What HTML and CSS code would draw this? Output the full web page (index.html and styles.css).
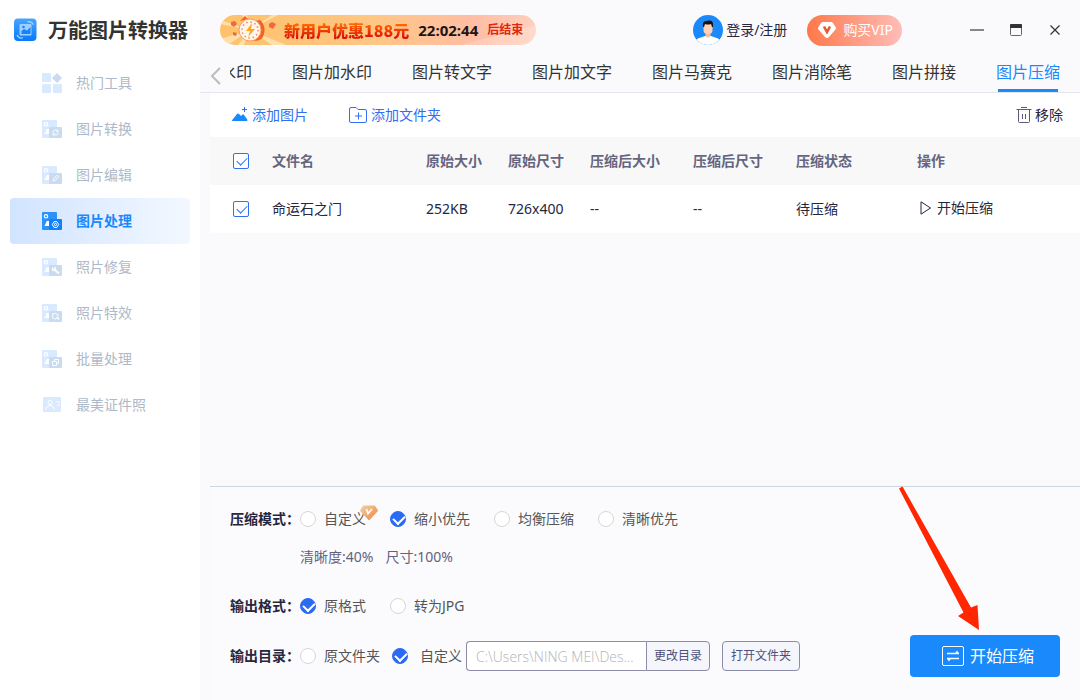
FILE: index.html
```html
<!DOCTYPE html>
<html lang="zh-CN">
<head>
<meta charset="utf-8">
<title>万能图片转换器</title>
<link rel="stylesheet" href="styles.css">
</head>
<body>
<svg class="defs" aria-hidden="true">
  <defs>
    <symbol id="photo" viewBox="0 0 20 18">
      <path class="sheet" d="M1 0h13a1 1 0 0 1 1 1v16a1 1 0 0 1-1 1H1a1 1 0 0 1-1-1V1a1 1 0 0 1 1-1z"/>
      <circle cx="4" cy="4.300" r="1.700" fill="none" stroke="#fff" stroke-width="1.200"/>
      <path d="M2.500 14l2.300-5h2.200v5z" fill="#fff"/>
      <rect class="tile" x="7" y="7" width="13" height="11" rx="1"/>
    </symbol>
  </defs>
</svg>
<div class="app">
  <aside class="sidebar">
    <div class="brand">
      <svg width="24" height="24" viewBox="0 0 24 24" aria-hidden="true">
        <defs><linearGradient id="lg" x1="0" y1="0" x2="0" y2="1"><stop offset="0" stop-color="#46a6ff"/><stop offset="1" stop-color="#0a78fb"/></linearGradient></defs>
        <rect x="0" y="0.500" width="22.500" height="22.500" rx="4" fill="url(#lg)"/>
        <rect x="5.500" y="6" width="12" height="11.500" rx="1" fill="#9dd0ff"/>
        <path d="M7.500 16v-3l2.500-2 3 1.500L16.500 9v7z" fill="#1683fa"/>
        <circle cx="9.500" cy="9" r="1.300" fill="#1683fa"/>
        <path d="M13.500 3.800q4-1 6 3M3 17q2 4 6 2.800" fill="none" stroke="#a8d6ff" stroke-width="1.200"/>
      </svg>
      <h1>万能图片转换器</h1>
    </div>
    <nav class="nav">
      <button class="item" type="button"><svg width="20" height="20" viewBox="0 0 20 20"><rect class="sheet" width="9" height="9" rx="1"/><rect class="sheet" y="11" width="9" height="9" rx="1"/><rect class="sheet" x="11" y="11" width="9" height="9" rx="1"/><path class="tile" d="M15 0l5 5-5 5-5-5z"/></svg>热门工具</button>
      <button class="item" type="button"><svg width="20" height="18" viewBox="0 0 20 18"><use href="#photo"/><path class="mark" d="M10.800 12.500a2.700 2.700 0 0 1 5-1.300M16.200 12.500a2.700 2.700 0 0 1-5 1.300M15.900 9.500v1.800h-1.700M11.100 15.500v-1.800h1.700"/></svg>图片转换</button>
      <button class="item" type="button"><svg width="20" height="18" viewBox="0 0 20 18"><use href="#photo"/><path class="mark" d="M11 15l.5-2.200 3.700-3.500 1.500 1.500-3.700 3.700z"/></svg>图片编辑</button>
      <button class="item active" type="button"><svg width="20" height="18" viewBox="0 0 20 18"><use href="#photo"/><path class="mark" d="M12 9.700h3l1.700 2.800-1.700 2.900h-3l-1.700-2.900z"/><circle class="mark" cx="13.500" cy="12.500" r="1.100"/></svg>图片处理</button>
      <button class="item" type="button"><svg width="20" height="18" viewBox="0 0 20 18"><use href="#photo"/><circle cx="12" cy="11" r="2.200" fill="#fff"/><path d="M13 12l4 3.500" stroke="#fff" stroke-width="2"/><path class="tile" d="M11 8l1.800 2.200-1.500 1z"/></svg>照片修复</button>
      <button class="item" type="button"><svg width="20" height="18" viewBox="0 0 20 18"><use href="#photo"/><path class="mark" d="M10.500 9.500l1.500.5 1.500-1 1 1.200 1.700.3-.5 2 1 2-2-.2-1.700 1-1.200-1.300-1.500-.3.700-1.700zM14.500 13l2.500 3"/></svg>照片特效</button>
      <button class="item" type="button"><svg width="20" height="18" viewBox="0 0 20 18"><use href="#photo"/><path class="mark" d="M10.500 11.500h4v4h-4zM12.500 11.500v-2h4v4h-2"/></svg>批量处理</button>
      <button class="item" type="button"><svg width="20" height="16" viewBox="0 0 20 16"><rect class="sheet" x="1" width="18" height="15" rx="1"/><circle class="mark" cx="8" cy="5.500" r="2"/><path class="mark" d="M3.500 12.500q1-4 4.500-4t4.500 4M14 5h4M15 8h3"/></svg>最美证件照</button>
    </nav>
  </aside>

  <main class="main">
    <header class="topbar">
      <div class="promo">
        <svg class="clock" width="70" height="30" viewBox="0 0 70 30" aria-hidden="true">
          <g fill="#fff3cf" opacity=".6"><path d="M30 15L0 24v6h8zM30 15L18 30h6zM30 15l22 15h14zM30 15L22 0h5zM30 15L58 0h-6zM30 15L0 5v4z"/></g>
          <path d="M11 7l4-1 2 3-3 3-3-2zM49 9l3-2 4 2-3 5-4-2zM13 17l4 1-1 3-3-1z" fill="#ee6a3c"/>
          <path d="M20 6l5-5 3 3M31 25q11 3 13-6t-4-14l-5 1z" fill="#f26126"/>
          <circle cx="30" cy="15" r="11" fill="#fff5e8" stroke="#fa9a62"/>
          <circle cx="30" cy="15" r="8" fill="none" stroke="#ef896a" stroke-width="1.500" stroke-dasharray="1.500 2.700"/>
          <path d="M32 8l-6 8h4l-2 6 7-8h-4z" fill="#ffa51f"/>
        </svg>
        <strong class="offer">新用户优惠188元</strong>
        <time class="timer">22:02:44</time>
        <span class="ends">后结束</span>
      </div>
      <div class="account">
        <button class="login" type="button">
          <svg width="30" height="30" viewBox="0 0 30 30" aria-hidden="true">
            <defs><clipPath id="av"><circle cx="15" cy="15" r="15"/></clipPath></defs>
            <g clip-path="url(#av)"><rect width="30" height="30" fill="#1a89fb"/><path d="M2 30q0-7 6-7.500l4-1.500h6l4 1.500q6 .5 6 7.500z" fill="#fff"/><path d="M12.500 17h5v4q-2.500 3-5 0z" fill="#f6bd9f"/><rect x="10.500" y="8" width="9" height="11" rx="4" fill="#ffd2b8"/><path d="M10 12q-1-6 3-6 7-2 7 3v3h-1l-1-3q-3 1-6 0l-1 3z" fill="#17120f"/></g>
          </svg>登录/注册
        </button>
        <button class="vip" type="button">
          <svg width="18" height="16" viewBox="0 0 18 16" aria-hidden="true"><path d="M5 0h8q1 0 2 1l2.500 4q1 1 0 2.500L11 15q-2 2-4 0L.5 7.500q-1-1.500 0-2.500L3 1q1-1 2-1z" fill="#fff"/><path d="M6 4.500l3 5.500 3-5.500" fill="none" stroke="#e9592c" stroke-width="2.600"/></svg>购买VIP
        </button>
        <div class="window">
          <button type="button" aria-label="最小化"><svg width="14" height="14" viewBox="0 0 14 14"><path d="M0 7h14" stroke="#888" stroke-width="2"/></svg></button>
          <button type="button" aria-label="最大化"><svg width="12" height="12" viewBox="0 0 12 12"><rect x=".5" y=".5" width="11" height="11" rx="1" fill="none" stroke="#666"/><path d="M0 1q0-1 1-1h10q1 0 1 1v3H0z" fill="#333"/></svg></button>
          <button type="button" aria-label="关闭"><svg width="10" height="10" viewBox="0 0 10 10"><path d="M.5.500l9 9M9.500.500l-9 9" stroke="#333" stroke-width="1.200"/></svg></button>
        </div>
      </div>
    </header>

    <div class="tabbar">
      <button class="prev" type="button" aria-label="上一页"><svg width="12" height="18" viewBox="0 0 12 18"><path d="M10 1L2 9l8 8" fill="none" stroke="#bbb" stroke-width="2"/></svg></button>
      <nav class="tabs">
        <a class="tab" href="#">图片去水印</a>
        <a class="tab" href="#">图片加水印</a>
        <a class="tab" href="#">图片转文字</a>
        <a class="tab" href="#">图片加文字</a>
        <a class="tab" href="#">图片马赛克</a>
        <a class="tab" href="#">图片消除笔</a>
        <a class="tab" href="#">图片拼接</a>
        <a class="tab current" href="#">图片压缩</a>
      </nav>
    </div>

    <section class="files">
      <div class="toolbar">
        <button class="add" type="button"><svg width="16" height="16" viewBox="0 0 16 16"><path d="M0 14q0-1 1-2l4-5q1-1 2 0l2 2 1.500-1.500q1-.5 1.500.5l3 4q1 2 0 2H1q-1 0-1 0z" fill="#1a89fb"/><path d="M12.500 0v5M10 2.500h5" stroke="#2f6ff0"/></svg>添加图片</button>
        <button class="add" type="button"><svg width="18" height="16" viewBox="0 0 18 16"><path d="M2 .500h5l2 2h7q1.500 0 1.500 1.500v10q0 1.500-1.500 1.500H2Q.500 15.500.500 14V2Q.500.500 2 .500zM9.500 5.500v7M6 9h7" fill="none" stroke="#2f6ff0"/></svg>添加文件夹</button>
        <button class="remove" type="button"><svg width="16" height="16" viewBox="0 0 16 16"><path d="M.500 2.500h15M5 .500h6M2.500 2.500v12q0 1 1 1h9q1 0 1-1v-12M6.500 7v5M9.500 7v5" fill="none" stroke="#5a5a78"/></svg>移除</button>
      </div>
      <table class="table">
        <colgroup><col class="c-check"><col class="c-name"><col class="c-size"><col class="c-size"><col class="c-after"><col class="c-after"><col class="c-state"><col></colgroup>
        <thead>
          <tr><th class="pick"><input type="checkbox" class="check" aria-label="全选" checked></th><th>文件名</th><th>原始大小</th><th>原始尺寸</th><th>压缩后大小</th><th>压缩后尺寸</th><th>压缩状态</th><th>操作</th></tr>
        </thead>
        <tbody>
          <tr><td class="pick"><input type="checkbox" class="check" aria-label="选择 命运石之门" checked></td><td>命运石之门</td><td>252KB</td><td>726x400</td><td>--</td><td>--</td><td>待压缩</td><td><button class="run" type="button"><svg width="12" height="14" viewBox="0 0 12 14"><path d="M1 .800l9.500 6.200L1 13.200z" fill="none" stroke="#26263f" stroke-linejoin="round"/></svg>开始压缩</button></td></tr>
        </tbody>
      </table>
    </section>

    <form class="settings">
      <div class="row mode" role="radiogroup" aria-labelledby="l1">
        <span class="legend" id="l1">压缩模式：</span>
        <label class="option"><input type="radio" class="radio" name="mode">自定义<svg class="badge" width="18" height="16" viewBox="0 0 18 16"><defs><linearGradient id="bg" x1="0" y1="0" x2="1" y2="1"><stop offset="0" stop-color="#f8cfa5"/><stop offset="1" stop-color="#e68743"/></linearGradient></defs><path d="M4 .500h10q1 0 1.500 1l2 3q.5 1 0 2L10 14.500q-1 1-2 0L.500 6.500q-.5-1 0-2l2-3q.5-1 1.500-1z" fill="url(#bg)"/><path d="M6.500 4l1.500 4.500L12 4" fill="none" stroke="#fff" stroke-width="1.800"/></svg></label>
        <label class="option"><input type="radio" class="radio" name="mode" checked>缩小优先</label>
        <label class="option"><input type="radio" class="radio" name="mode">均衡压缩</label>
        <label class="option"><input type="radio" class="radio" name="mode">清晰优先</label>
      </div>
      <div class="row info"><span>清晰度:40%</span><span>尺寸:100%</span></div>
      <div class="row format" role="radiogroup" aria-labelledby="l2">
        <span class="legend" id="l2">输出格式：</span>
        <label class="option"><input type="radio" class="radio" name="format" checked>原格式</label>
        <label class="option"><input type="radio" class="radio" name="format">转为JPG</label>
      </div>
      <div class="row folder">
        <span class="legend">输出目录：</span>
        <label class="option source"><input type="radio" class="radio" name="dir">原文件夹</label>
        <label class="option custom"><input type="radio" class="radio" name="dir" checked>自定义</label>
        <div class="path"><input type="text" class="path-text" aria-label="输出目录" value="C:\Users\NING MEI\Des..." readonly><button class="small joined" type="button">更改目录</button></div>
        <button class="small" type="button">打开文件夹</button>
        <button class="start" type="button"><svg width="22" height="20" viewBox="0 0 22 20"><rect x=".5" y=".5" width="21" height="19" rx="1.500" fill="none" stroke="#fff"/><path d="M5 7.500h12M5 12.500h12" stroke="#fff" stroke-width="1.300"/><path d="M13 7.500l2-3 2 3zM5 12.500l2 3 2-3z" fill="#fff"/></svg>开始压缩</button>
      </div>
      <svg class="pointer" width="82" height="144" viewBox="0 0 82 144" aria-hidden="true"><path d="M1 2.500L4.500.500 73 121.500l6.500-2.500L81 144 60 130l5.500-3.500z" fill="#ff2600"/></svg>
    </form>
  </main>
</div>
</body>
</html>
```

FILE: styles.css
```css
* { box-sizing: border-box; }

body {
  margin: 0;
  font-family: "Noto Sans", "Noto Sans CJK SC", sans-serif;
  font-size: 14px;
  line-height: 20px;
  color: #26263f;
}

button {
  display: inline-flex;
  align-items: center;
  padding: 0;
  border: 0;
  background: none;
  color: inherit;
  font: inherit;
  white-space: nowrap;
}

svg { display: block; flex: none; }
.defs { position: absolute; width: 0; height: 0; }

.app { display: flex; min-height: 100vh; background: #fafafd; }

/* Sidebar */
.sidebar { flex: none; width: 200px; background: #fff; }
.brand { display: flex; align-items: center; gap: 10px; height: 60px; padding-left: 14px; }
.brand h1 { margin: 0; font-family: "Noto Sans CJK SC", sans-serif; font-size: 20px; line-height: 28px; font-weight: 700; color: #333; }
.nav { display: flex; flex-direction: column; padding: 0 10px; }
.item { --sheet: #d9eaff; --tile: #c8dbf1; height: 46px; padding-left: 32px; gap: 14px; border-radius: 4px; color: #adb9c9; }
.sheet { fill: var(--sheet); }
.tile { fill: var(--tile); }
.mark { fill: none; stroke: #fff; stroke-width: 1; }
.active { --sheet: #2b92fc; --tile: #1480f6; background: linear-gradient(90deg, #d1e4ff, #f3f8ff); color: #1a89fb; font-weight: 700; }

/* Main column */
.main { display: flex; flex: 1; flex-direction: column; min-width: 0; }
.topbar { display: flex; align-items: center; justify-content: space-between; height: 60px; padding: 0 20px; }
.promo {
  position: relative;
  display: flex;
  align-items: center;
  gap: 9px;
  height: 30px;
  padding: 0 13px 0 64px;
  overflow: hidden;
  border-radius: 15px;
  background: linear-gradient(165deg, transparent 82%, #ffffff33 83%), linear-gradient(90deg, #ffc16b, #ffc685 50%, #ffbda4 80%, #ffd0bd);
}
.clock { position: absolute; left: 0; top: 0; }
.offer { font-family: "Noto Sans CJK SC", sans-serif; font-size: 16px; font-weight: 900; background: linear-gradient(#ff6a00 20%, #dd1208 85%); background-clip: text; color: transparent; }
.timer { font-family: "Open Sans", sans-serif; font-size: 15px; font-weight: 700; color: #1c1515; }
.ends { font-size: 12px; font-weight: 700; color: #e3260c; }
.account { display: flex; align-items: center; }
.login { gap: 3px; }
.vip { gap: 7px; height: 31px; margin-left: 20px; padding: 0 9px 0 11px; border-radius: 16px; background: linear-gradient(90deg, #ff784a, #ffbdb8); color: #fff; }
.window { display: flex; align-items: center; gap: 26px; margin-left: 68px; }
.window button:last-child { margin-left: 2px; }

.tabbar { display: flex; height: 33px; border-bottom: 1px solid #e4e5f0; }
.prev { width: 30px; padding-left: 10px; }
.tabs { display: flex; flex: 1; justify-content: flex-end; gap: 40px; min-width: 0; padding-right: 20px; overflow: hidden; }
.tab { position: relative; flex: none; font-size: 16px; line-height: 25px; color: #333; text-decoration: none; }
.current { color: #1a89fb; }
.current::after { content: ""; position: absolute; left: 2px; right: 2px; bottom: 0; height: 3px; background: #1a89fb; }

/* File list */
.files { flex: 1; margin-left: 10px; }
.toolbar { display: flex; align-items: center; gap: 41px; height: 44px; padding: 0 17px 0 22px; background: #fff; }
.add { gap: 4px; color: #2f6ff0; }
.remove { gap: 3px; margin-left: auto; }
.table { width: 100%; table-layout: fixed; border-collapse: collapse; background: #fff; }
.table th, .table td { height: 48px; padding: 0; text-align: left; }
.table th { background: #f8f8f8; color: #65657f; font-weight: 700; }
.table .pick { padding-left: 23px; }
.c-check { width: 62px; }
.c-name { width: 154px; }
.c-size { width: 82px; }
.c-after { width: 103px; }
.c-state { width: 121px; }
.run { gap: 5px; padding-left: 3px; }

.check, .radio { position: relative; display: block; flex: none; width: 16px; height: 16px; margin: 0; appearance: none; background: #fff; }
.check { border: 1px solid #2f6ff0; border-radius: 2px; }
.check:checked::before { content: ""; position: absolute; left: 5px; top: 1px; width: 5px; height: 9px; border: solid #2f6ff0; border-width: 0 1px 1px 0; transform: rotate(45deg); }
.radio { border: 1px solid #d6d6d6; border-radius: 50%; }
.radio:checked { border-color: #2b6bf3; background: #2b6bf3; }
.radio:checked::before { content: ""; position: absolute; left: 4px; top: 1px; width: 6px; height: 9px; border: solid #fff; border-width: 0 2px 2px 0; transform: rotate(45deg); }

/* Output settings */
.settings { position: relative; margin-left: 10px; padding: 22px 20px 23px; border-top: 1px solid #ccd6e6; background: #fbfbfe; color: #555; }
.row { display: flex; align-items: center; height: 20px; }
.legend { flex: none; width: 70px; font-weight: 700; color: #26263f; white-space: nowrap; }
.option { position: relative; display: flex; align-items: center; gap: 8px; margin-right: 24px; white-space: nowrap; }
.badge { position: absolute; right: -12px; top: -4px; }
.info { gap: 12px; margin-top: 18px; padding-left: 70px; color: #62627d; }
.format { margin-top: 29px; }
.folder { height: 42px; margin-top: 19px; }
.source { margin-right: 12px; }
.custom { gap: 12px; margin-right: 4px; }
.path { display: flex; height: 30px; margin-right: 12px; }
.path-text { width: 180px; padding: 0 9px; border: 1px solid #8c8ca8; border-right: 0; border-radius: 4px 0 0 4px; background: #fff; color: #b4b4b4; font-family: "Open Sans", sans-serif; font-size: 14px; font-weight: 300; }
.small { justify-content: center; height: 30px; padding: 0 8px; border: 1px solid #8c8ca8; border-radius: 4px; background: #f4f6fb; color: #50507a; font-size: 12px; }
.joined { padding: 0 7px; border-radius: 0 4px 4px 0; }
.start { justify-content: center; gap: 6px; width: 150px; height: 42px; margin-left: auto; padding-left: 6px; border-radius: 4px; background: #1a89fb; color: #fff; font-size: 16px; }
.pointer { position: absolute; right: 100px; bottom: 70px; pointer-events: none; }
```
